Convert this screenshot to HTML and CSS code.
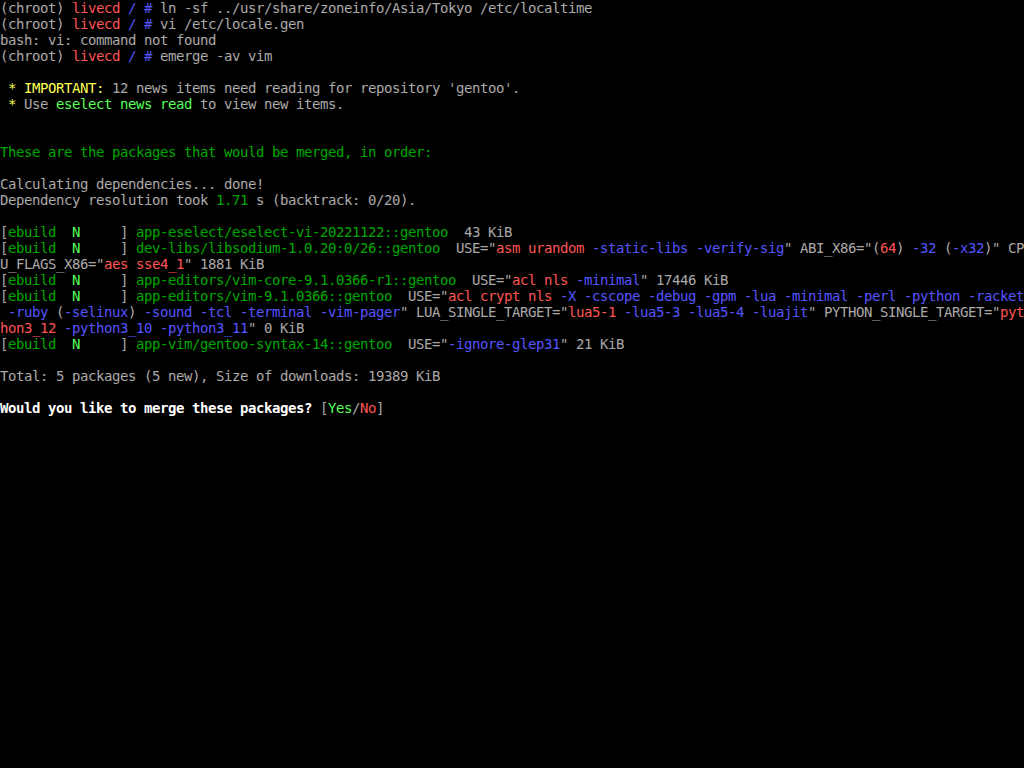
FILE: index.html
```html
<!DOCTYPE html>
<html>
<head>
<meta charset="utf-8">
<link rel="stylesheet" href="styles.css">
</head>
<body>
<div class="term">
<div class="ln">(chroot) <span class="r">livecd</span> <span class="b">/ #</span> ln -sf ../usr/share/zoneinfo/Asia/Tokyo /etc/localtime</div>
<div class="ln">(chroot) <span class="r">livecd</span> <span class="b">/ #</span> vi /etc/locale.gen</div>
<div class="ln">bash: vi: command not found</div>
<div class="ln">(chroot) <span class="r">livecd</span> <span class="b">/ #</span> emerge -av vim</div>
<div class="ln"> </div>
<div class="ln"> <span class="y">* IMPORTANT:</span> 12 news items need reading for repository 'gentoo'.</div>
<div class="ln"> <span class="y">*</span> Use <span class="bg">eselect news read</span> to view new items.</div>
<div class="ln"> </div>
<div class="ln"> </div>
<div class="ln"><span class="gr">These are the packages that would be merged, in order:</span></div>
<div class="ln"> </div>
<div class="ln">Calculating dependencies... done!</div>
<div class="ln">Dependency resolution took <span class="gr">1.71</span> s (backtrack: 0/20).</div>
<div class="ln"> </div>
<div class="ln">[<span class="gr">ebuild</span>  <span class="bg">N</span>     ] <span class="gr">app-eselect/eselect-vi-20221122::gentoo</span>  43 KiB</div>
<div class="ln">[<span class="gr">ebuild</span>  <span class="bg">N</span>     ] <span class="gr">dev-libs/libsodium-1.0.20:0/26::gentoo</span>  USE="<span class="r">asm urandom</span> <span class="b">-static-libs -verify-sig</span>" ABI_X86="(<span class="r">64</span>) <span class="b">-32</span> (<span class="b">-x32</span>)" CP</div>
<div class="ln">U_FLAGS_X86="<span class="r">aes sse4_1</span>" 1881 KiB</div>
<div class="ln">[<span class="gr">ebuild</span>  <span class="bg">N</span>     ] <span class="gr">app-editors/vim-core-9.1.0366-r1::gentoo</span>  USE="<span class="r">acl nls</span> <span class="b">-minimal</span>" 17446 KiB</div>
<div class="ln">[<span class="gr">ebuild</span>  <span class="bg">N</span>     ] <span class="gr">app-editors/vim-9.1.0366::gentoo</span>  USE="<span class="r">acl crypt nls</span> <span class="b">-X -cscope -debug -gpm -lua -minimal -perl -python -racket</span></div>
<div class="ln"><span class="b"> -ruby</span> (<span class="b">-selinux</span>) <span class="b">-sound -tcl -terminal -vim-pager</span>" LUA_SINGLE_TARGET="<span class="r">lua5-1</span> <span class="b">-lua5-3 -lua5-4 -luajit</span>" PYTHON_SINGLE_TARGET="<span class="r">pyt</span></div>
<div class="ln"><span class="r">hon3_12</span> <span class="b">-python3_10 -python3_11</span>" 0 KiB</div>
<div class="ln">[<span class="gr">ebuild</span>  <span class="bg">N</span>     ] <span class="gr">app-vim/gentoo-syntax-14::gentoo</span>  USE="<span class="b">-ignore-glep31</span>" 21 KiB</div>
<div class="ln"> </div>
<div class="ln">Total: 5 packages (5 new), Size of downloads: 19389 KiB</div>
<div class="ln"> </div>
<div class="ln"><span class="w">Would you like to merge these packages?</span> [<span class="bg">Yes</span>/<span class="r">No</span>]</div>
</div>
</body>
</html>
```

FILE: styles.css
```css
html, body {
  margin: 0;
  padding: 0;
  background: #000;
  height: 100%;
}
.term {
  font-family: "DejaVu Sans Mono", "Liberation Mono", monospace;
  font-size: 14px;
  letter-spacing: -0.43px;
  line-height: 16px;
  color: #aaaaaa;
  width: 1024px;
  overflow: hidden;
}
.ln {
  white-space: pre;
  height: 16px;
}
.r { color: #ff5555; }
.b { color: #5555ff; }
.gr { color: #00aa00; }
.bg { color: #55ff55; }
.y { color: #ffff55; }
.w { color: #ffffff; font-weight: bold; }
```
